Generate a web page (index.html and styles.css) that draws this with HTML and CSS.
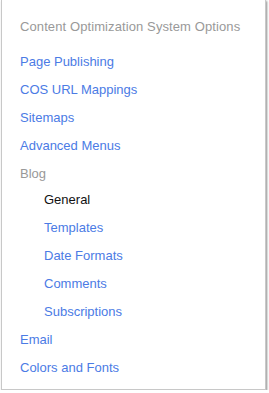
FILE: index.html
```html
<!DOCTYPE html>
<html lang="en">
<head>
    <meta charset="UTF-8">
    <meta name="viewport" content="width=device-width, initial-scale=1.0">
    <title>COS Options</title>
    <link rel="stylesheet" href="styles.css">
</head>
<body>
    <div class="panel">
        <h3 class="panel-title">Content Optimization System Options</h3>
        <ul class="nav">
            <li><a href="#">Page Publishing</a></li>
            <li><a href="#">COS URL Mappings</a></li>
            <li><a href="#">Sitemaps</a></li>
            <li><a href="#">Advanced Menus</a></li>
            <li>
                <span class="group">Blog</span>
                <ul class="sub-nav">
                    <li class="active">General</li>
                    <li><a href="#">Templates</a></li>
                    <li><a href="#">Date Formats</a></li>
                    <li><a href="#">Comments</a></li>
                    <li><a href="#">Subscriptions</a></li>
                </ul>
            </li>
            <li><a href="#">Email</a></li>
            <li><a href="#">Colors and Fonts</a></li>
        </ul>
    </div>
</body>
</html>
```
FILE: styles.css
```css
body {
    font-family: "Liberation Sans", Arial, sans-serif;
    font-size: 13px;
    background-color: #fff;
    margin: 0;
    padding: 0;
}

.panel {
    width: 265px;
    height: 390px;
    margin-left: 1px;
    box-sizing: border-box;
    padding: 18px 0 0 18px;
    border: 1px solid #c8c8c8;
    border-top: none;
    box-shadow: 1px 1px 2px rgba(0, 0, 0, 0.45);
}

.panel-title {
    margin: 0 0 12px;
    font-size: 13px;
    font-weight: normal;
    line-height: 18px;
    letter-spacing: 0.1px;
    color: #999;
}

.nav, .sub-nav {
    list-style: none;
    margin: 0;
    padding: 0;
}

.nav li {
    line-height: 28px;
}

.nav a {
    color: #4b7be5;
    text-decoration: none;
}

.group {
    color: #999;
}

.sub-nav {
    margin-top: -2px;
    padding-left: 24px;
}

.sub-nav .active {
    color: #111;
}
```
